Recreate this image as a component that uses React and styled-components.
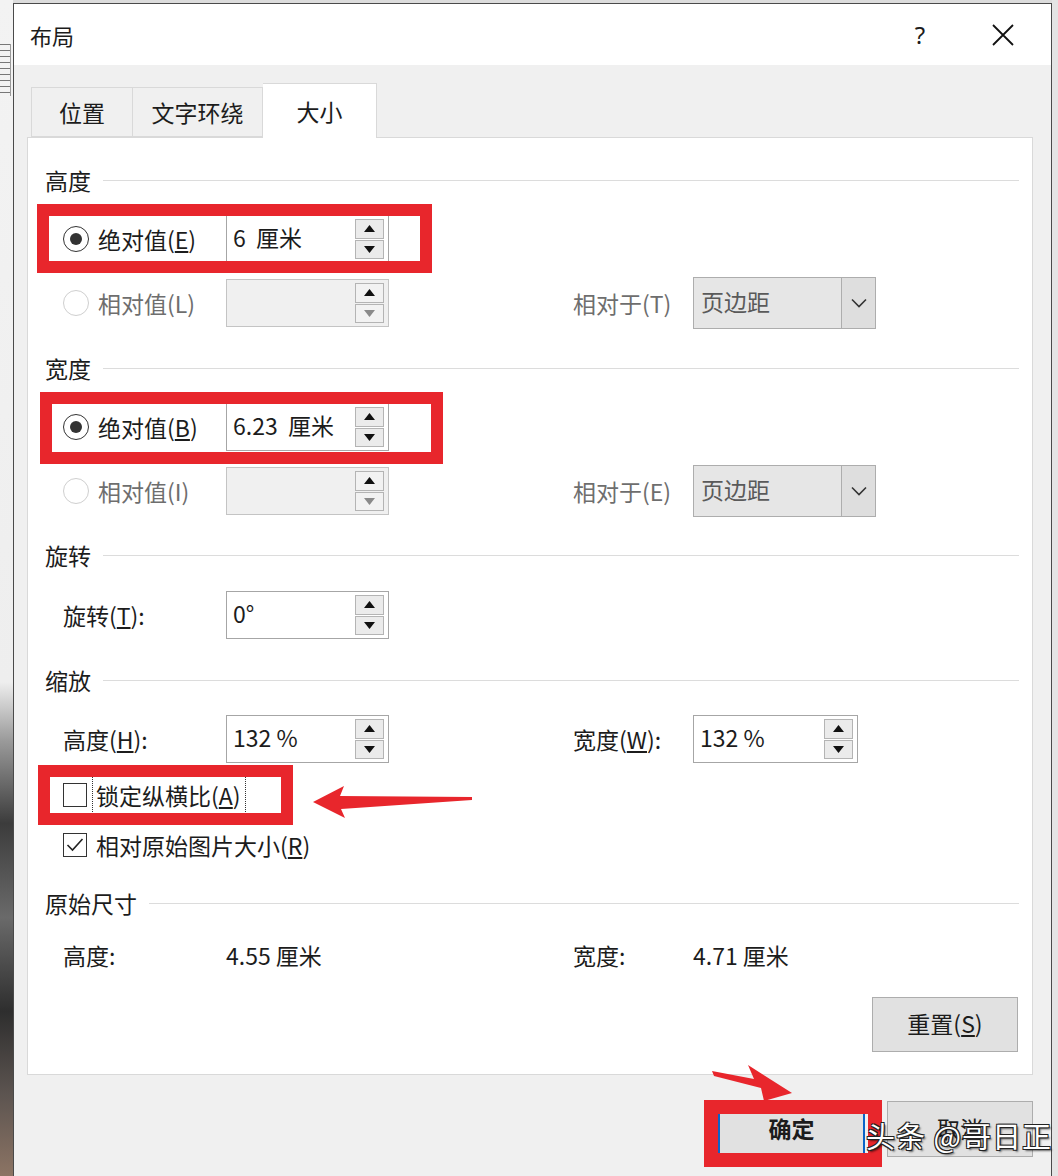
import React from 'react';
import styled, { createGlobalStyle } from 'styled-components';

const red = '#e8262c';
const ink = '#1c1c1c';
const dim = '#6e6e6e';

const GlobalStyle = createGlobalStyle`
  html, body { margin: 0; padding: 0; }
  body {
    width: 1058px;
    height: 1176px;
    overflow: hidden;
    background: #dcdcdc;
    font-family: "Noto Sans CJK SC", "Noto Sans", sans-serif;
    color: ${ink};
  }
  * { box-sizing: border-box; }
`;

const Screen = styled.div`
  position: relative;
  display: flex;
  width: 1058px;
  height: 1176px;
  overflow: hidden;
`;

const Backdrop = styled.div`
  flex: none;
  width: 13px;
  padding-top: 44px;
  background: linear-gradient(to bottom, #f3f3f3 0%, #eeeeee 58%, #9a9a9a 63%, #3c3c3c 70%, #6a6a6a 78%, #2e2e2e 86%, #5c5450 93%, #8c7464 100%);
`;

const Ruler = styled.div`
  width: 11px;
  height: 52px;
  border-right: 1px solid #9a9a9a;
  background: repeating-linear-gradient(to bottom, #777 0 1px, transparent 1px 6px);
`;

const Dialog = styled.div`
  flex: none;
  width: 1039px;
  margin-top: 3px;
  display: flex;
  flex-direction: column;
  border: 1px solid #4a4a4a;
  border-bottom: none;
  background: #f0f0f0;
`;

const TitleBar = styled.div`
  height: 61px;
  flex: none;
  display: flex;
  align-items: center;
  padding-left: 16px;
  padding-right: 14px;
  background: #ffffff;
  font-size: 22px;
`;

const Title = styled.div`
  flex: 1;
`;

const TitleButton = styled.div`
  width: ${(p) => p.$w}px;
  height: 61px;
  margin-right: ${(p) => p.$mr || 0}px;
  display: flex;
  align-items: center;
  justify-content: center;
  font-family: "Noto Sans", sans-serif;
  font-size: 24px;
`;

const Body = styled.div`
  flex: 1;
  display: flex;
  flex-direction: column;
  padding: 18px 18px 0 13px;
`;

const Tabs = styled.div`
  display: flex;
  align-items: flex-end;
  height: 54px;
  margin-left: 4px;
  position: relative;
  z-index: 1;
`;

const Tab = styled.div`
  width: ${(p) => p.$w}px;
  height: ${(p) => (p.$active ? 55 : 50)}px;
  margin-bottom: ${(p) => (p.$active ? -1 : 0)}px;
  display: flex;
  align-items: center;
  justify-content: center;
  font-size: 23px;
  background: ${(p) => (p.$active ? '#ffffff' : '#f0f0f0')};
  border: 1px solid #d9d9d9;
  border-bottom: ${(p) => (p.$active ? 'none' : '1px solid #d9d9d9')};
  & + & { border-left: none; }
`;

const Panel = styled.div`
  height: 938px;
  display: flex;
  flex-direction: column;
  padding: 28px 13px 0 17px;
  background: #ffffff;
  border: 1px solid #d9d9d9;
`;

const Heading = styled.div`
  height: 28px;
  margin-top: ${(p) => p.$mt || 0}px;
  display: flex;
  align-items: center;
  gap: 12px;
  font-size: 23px;
  &::after {
    content: '';
    flex: 1;
    height: 1px;
    background: #dcdcdc;
  }
`;

const Row = styled.div`
  height: ${(p) => p.$h || 48}px;
  margin-top: ${(p) => p.$mt || 0}px;
  padding-left: 18px;
  display: grid;
  grid-template-columns: 163px 163px 184px 120px 1fr;
  align-items: center;
  font-size: 23px;
`;

const Label = styled.div`
  display: flex;
  align-items: center;
  gap: 9px;
  white-space: nowrap;
  color: ${(p) => (p.$disabled ? dim : ink)};
`;

const Radio = styled.span`
  flex: none;
  width: 26px;
  height: 26px;
  border-radius: 50%;
  border: 1.5px solid ${(p) => (p.$disabled ? '#cfcfcf' : '#333')};
  display: flex;
  align-items: center;
  justify-content: center;
  &::after {
    content: '';
    width: 12px;
    height: 12px;
    border-radius: 50%;
    background: ${(p) => (p.$checked ? '#333' : 'transparent')};
  }
`;

const Box = styled.span`
  flex: none;
  width: 24px;
  height: 24px;
  border: 1.5px solid #333;
  display: flex;
  align-items: center;
  justify-content: center;
`;

const CheckRow = styled.div`
  height: 40px;
  margin-top: ${(p) => p.$mt || 0}px;
  padding-left: 18px;
  display: flex;
  align-items: center;
  gap: 9px;
  font-size: 23px;
`;

const Focus = styled.span`
  height: 38px;
  display: flex;
  align-items: center;
  margin-left: -4px;
  padding: 0 4px 0 3px;
  border: 1px dotted #333;
`;

const Spin = styled.div`
  width: ${(p) => p.$w || 163}px;
  height: ${(p) => p.$h || 48}px;
  display: flex;
  align-items: stretch;
  border: 1px solid ${(p) => (p.$disabled ? '#c4c4c4' : '#a6a6a6')};
  background: ${(p) => (p.$disabled ? '#f0f0f0' : '#ffffff')};
`;

const SpinValue = styled.div`
  flex: 1;
  display: flex;
  align-items: center;
  padding-left: 6px;
  padding-bottom: 4px;
  font-size: 23px;
  white-space: pre;
`;

const SpinButtons = styled.div`
  width: 29px;
  margin: 3px 4px 3px 0;
  display: flex;
  flex-direction: column;
  gap: 1px;
`;

const SpinBtn = styled.div`
  flex: 1;
  display: flex;
  align-items: center;
  justify-content: center;
  border: 1px solid #b4b4b4;
  background: ${(p) => (p.$disabled ? '#f2f2f2' : '#ebebeb')};
`;

const Select = styled.div`
  width: 183px;
  height: 52px;
  display: flex;
  border: 1px solid #adadad;
  background: #e6e6e6;
`;

const SelectValue = styled.div`
  flex: 1;
  display: flex;
  align-items: center;
  padding: 0 0 4px 7px;
  font-size: 23px;
  color: #5a5a5a;
`;

const SelectArrow = styled.div`
  width: 34px;
  display: flex;
  align-items: center;
  justify-content: center;
  border-left: 1px solid #adadad;
  background: #dedede;
`;

const ResetRow = styled.div`
  margin-top: 22px;
  display: flex;
  justify-content: flex-end;
  padding-right: 1px;
`;

const Button = styled.div`
  width: ${(p) => p.$w}px;
  height: ${(p) => p.$h}px;
  display: flex;
  align-items: center;
  justify-content: center;
  padding-bottom: 3px;
  font-size: 23px;
  font-weight: ${(p) => (p.$primary ? 600 : 400)};
  background: #e1e1e1;
  border: ${(p) => (p.$primary ? '2px solid #0a64c8' : '1px solid #adadad')};
`;

const Footer = styled.div`
  display: flex;
  justify-content: flex-end;
  gap: 22px;
  padding-top: 26px;
`;

const RightEdge = styled.div`
  flex: 1;
  background: #e4e4e4;
`;

const Highlight = styled.div`
  position: absolute;
  left: ${(p) => p.$x}px;
  top: ${(p) => p.$y}px;
  width: ${(p) => p.$w}px;
  height: ${(p) => p.$h}px;
  border: ${(p) => p.$b || 12}px solid ${red};
  pointer-events: none;
`;

const Arrow = styled.svg`
  position: absolute;
  left: 0;
  top: 0;
  pointer-events: none;
`;

const Watermark = styled.div`
  position: absolute;
  left: 866px;
  top: 1114px;
  font-size: 29px;
  color: #ffffff;
  white-space: nowrap;
  letter-spacing: 1px;
  text-shadow: 1px 1px 0 #222, -1px -1px 0 #222, 1px -1px 0 #222, -1px 1px 0 #222, 2px 2px 2px rgba(0,0,0,0.6);
`;

function Tri({ down, color = '#111' }) {
  return (
    <svg width="11" height="7" viewBox="0 0 11 7">
      <polygon points={down ? '0,0 11,0 5.5,7' : '0,7 11,7 5.5,0'} fill={color} />
    </svg>
  );
}

function SpinBox({ value, disabled, w }) {
  return (
    <Spin $disabled={disabled} $w={w}>
      <SpinValue>{value}</SpinValue>
      <SpinButtons>
        <SpinBtn $disabled={disabled}><Tri /></SpinBtn>
        <SpinBtn $disabled={disabled}><Tri down color={disabled ? '#8a8a8a' : '#111'} /></SpinBtn>
      </SpinButtons>
    </Spin>
  );
}

function Dropdown() {
  return (
    <Select>
      <SelectValue>页边距</SelectValue>
      <SelectArrow>
        <svg width="16" height="10" viewBox="0 0 16 10">
          <polyline points="1,1.5 8,8.5 15,1.5" fill="none" stroke="#333" strokeWidth="1.6" />
        </svg>
      </SelectArrow>
    </Select>
  );
}

export default function App() {
  return (
    <Screen>
      <GlobalStyle />
      <Backdrop>
        <Ruler />
      </Backdrop>
      <Dialog>
        <TitleBar>
          <Title>布局</Title>
          <TitleButton $w={50} $mr={38}>?</TitleButton>
          <TitleButton $w={40} $mr={14}>
            <svg width="22" height="22" viewBox="0 0 22 22">
              <path d="M1 1 L21 21 M21 1 L1 21" stroke="#111" strokeWidth="1.8" />
            </svg>
          </TitleButton>
        </TitleBar>
        <Body>
          <Tabs>
            <Tab $w={102}>位置</Tab>
            <Tab $w={130}>文字环绕</Tab>
            <Tab $w={114} $active>大小</Tab>
          </Tabs>
          <Panel>
            <Heading>高度</Heading>
            <Row $mt={21}>
              <Label><Radio $checked /><span>绝对值(<u>E</u>)</span></Label>
              <SpinBox value="6  厘米" />
            </Row>
            <Row $mt={14}>
              <Label $disabled><Radio $disabled /><span>相对值(L)</span></Label>
              <SpinBox disabled value="" />
              <span />
              <Label $disabled>相对于(T)</Label>
              <Dropdown />
            </Row>

            <Heading $mt={29}>宽度</Heading>
            <Row $mt={21}>
              <Label><Radio $checked /><span>绝对值(<u>B</u>)</span></Label>
              <SpinBox value="6.23  厘米" />
            </Row>
            <Row $mt={14}>
              <Label $disabled><Radio $disabled /><span>相对值(I)</span></Label>
              <SpinBox disabled value="" />
              <span />
              <Label $disabled>相对于(E)</Label>
              <Dropdown />
            </Row>

            <Heading $mt={28}>旋转</Heading>
            <Row $mt={22}>
              <Label><span>旋转(<u>T</u>):</span></Label>
              <SpinBox value="0°" />
            </Row>

            <Heading $mt={27}>缩放</Heading>
            <Row $mt={21}>
              <Label><span>高度(<u>H</u>):</span></Label>
              <SpinBox value="132 %" />
              <span />
              <Label><span>宽度(<u>W</u>):</span></Label>
              <SpinBox value="132 %" w={165} />
            </Row>
            <CheckRow $mt={12}>
              <Box />
              <Focus>锁定纵横比(<u>A</u>)</Focus>
            </CheckRow>
            <CheckRow $mt={10}>
              <Box>
                <svg width="18" height="16" viewBox="0 0 18 16">
                  <polyline points="1.5,8 6.5,13 16.5,2" fill="none" stroke="#222" strokeWidth="1.6" />
                </svg>
              </Box>
              <span>相对原始图片大小(<u>R</u>)</span>
            </CheckRow>

            <Heading $mt={24}>原始尺寸</Heading>
            <Row $mt={18} $h={40}>
              <Label>高度:</Label>
              <Label>4.55 厘米</Label>
              <span />
              <Label>宽度:</Label>
              <Label>4.71 厘米</Label>
            </Row>
            <ResetRow>
              <Button $w={146} $h={55}><span>重置(<u>S</u>)</span></Button>
            </ResetRow>
          </Panel>
          <Footer>
            <Button $w={147} $h={56} $primary>确定</Button>
            <Button $w={146} $h={56}>取消</Button>
          </Footer>
        </Body>
      </Dialog>
      <RightEdge />

      <Highlight $x={37} $y={204} $w={395} $h={69} />
      <Highlight $x={40} $y={392} $w={403} $h={72} />
      <Highlight $x={38} $y={765} $w={255} $h={60} />
      <Highlight $x={704} $y={1100} $w={178} $h={67} $b={14} />

      <Arrow width="1058" height="1176" viewBox="0 0 1058 1176">
        <polygon points="313,802 344,786 340,796 472,797 472,800 341,809 345,818" fill={red} />
        <polygon points="712,1071 754,1079 748,1065 792,1093 764,1101 761,1088 714,1076" fill={red} />
      </Arrow>
      <Watermark>头条 @哥日正</Watermark>
    </Screen>
  );
}
